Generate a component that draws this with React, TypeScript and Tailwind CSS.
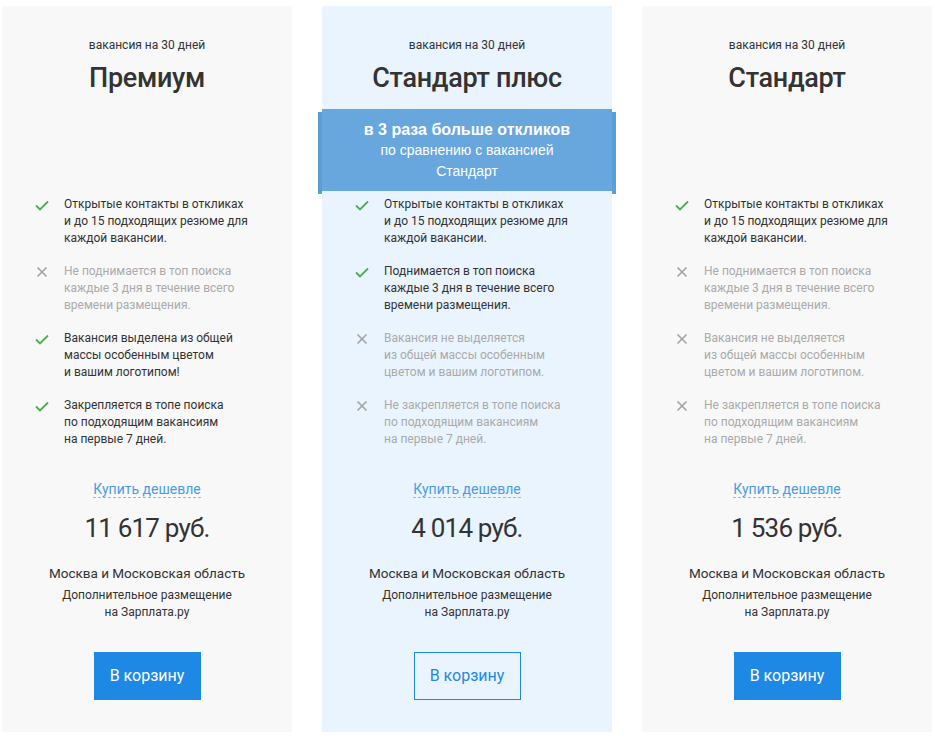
import React from "react";

type Feature = { ok: boolean; lines: string[] };

interface Plan {
  title: string;
  price: string;
  featured?: boolean;
  features: Feature[];
}

const F_CONTACTS: Feature = {
  ok: true,
  lines: ["Открытые контакты в откликах", "и до 15 подходящих резюме для", "каждой вакансии."],
};

const PLANS: Plan[] = [
  {
    title: "Премиум",
    price: "11 617 руб.",
    features: [
      F_CONTACTS,
      { ok: false, lines: ["Не поднимается в топ поиска", "каждые 3 дня в течение всего", "времени размещения."] },
      { ok: true, lines: ["Вакансия выделена из общей", "массы особенным цветом", "и вашим логотипом!"] },
      { ok: true, lines: ["Закрепляется в топе поиска", "по подходящим вакансиям", "на первые 7 дней."] },
    ],
  },
  {
    title: "Стандарт плюс",
    price: "4 014 руб.",
    featured: true,
    features: [
      F_CONTACTS,
      { ok: true, lines: ["Поднимается в топ поиска", "каждые 3 дня в течение всего", "времени размещения."] },
      { ok: false, lines: ["Вакансия не выделяется", "из общей массы особенным", "цветом и вашим логотипом."] },
      { ok: false, lines: ["Не закрепляется в топе поиска", "по подходящим вакансиям", "на первые 7 дней."] },
    ],
  },
  {
    title: "Стандарт",
    price: "1 536 руб.",
    features: [
      F_CONTACTS,
      { ok: false, lines: ["Не поднимается в топ поиска", "каждые 3 дня в течение всего", "времени размещения."] },
      { ok: false, lines: ["Вакансия не выделяется", "из общей массы особенным", "цветом и вашим логотипом."] },
      { ok: false, lines: ["Не закрепляется в топе поиска", "по подходящим вакансиям", "на первые 7 дней."] },
    ],
  },
];

function CheckIcon() {
  return (
    <svg width="14" height="11" viewBox="0 0 14 11" className="mt-[4px] shrink-0">
      <path d="M1 5.5 L5 9.5 L13 1.5" fill="none" stroke="#4cae50" strokeWidth="1.8" />
    </svg>
  );
}

function CrossIcon() {
  return (
    <svg width="14" height="11" viewBox="0 0 14 11" className="mt-[4px] shrink-0">
      <path d="M2.5 0.5 L11.5 9.5 M11.5 0.5 L2.5 9.5" fill="none" stroke="#a3a3a3" strokeWidth="1.6" />
    </svg>
  );
}

function PlanCard({ plan }: { plan: Plan }) {
  return (
    <div
      className={
        "flex w-[290px] flex-col pt-[31px] pb-[32px] " +
        (plan.featured ? "bg-[#eaf4fe]" : "bg-[#f8f8f8]")
      }
    >
      <div className="text-center text-[12px] leading-[16px] text-[#333]">вакансия на 30 дней</div>
      <h2 className="mt-[8px] text-center text-[27px] font-medium leading-[34px] tracking-[-0.3px] text-[#333]">
        {plan.title}
      </h2>

      <div className="mt-[14px] h-[82px]">
        {plan.featured && (
          <div
            className="relative h-[82px] bg-[#68a6de] pt-[10px] text-center text-white"
            style={{ fontFamily: "'Liberation Sans', Arial, sans-serif" }}
          >
            <div className="absolute top-[3px] left-[-4px] h-[82px] w-[4px] bg-[#5c9dd9]" />
            <div className="absolute top-[3px] right-[-4px] h-[82px] w-[4px] bg-[#5c9dd9]" />
            <div className="text-[16px] font-bold leading-[21px]">в 3 раза больше откликов</div>
            <div className="text-[14px] leading-[21px]">по сравнению с вакансией</div>
            <div className="text-[14px] leading-[21px]">Стандарт</div>
          </div>
        )}
      </div>

      <ul className="mt-[5px] flex flex-col gap-[16px] pl-[33px]">
        {plan.features.map((f, i) => (
          <li key={i} className="flex gap-[15px]">
            {f.ok ? <CheckIcon /> : <CrossIcon />}
            <div
              className={
                "text-[12px] leading-[17px] " + (f.ok ? "text-[#333]" : "text-[#aaa]")
              }
            >
              {f.lines.map((l, j) => (
                <div key={j}>{l}</div>
              ))}
            </div>
          </li>
        ))}
      </ul>

      <div className="mt-[29px] text-center">
        <a
          href="#"
          className="border-b border-dashed border-[#8dbcec] text-[14px] leading-[20px] text-[#4b9be6]"
        >
          Купить дешевле
        </a>
      </div>
      <div className="mt-[10px] text-center text-[26px] leading-[34px] tracking-[-0.8px] text-[#333]">
        {plan.price}
      </div>
      <div className="mt-[18px] text-center text-[13.5px] leading-[20px] text-[#333]">
        Москва и Московская область
      </div>
      <div className="mt-[4px] text-center text-[12px] leading-[17px] text-[#333]">
        Дополнительное размещение
        <br />
        на Зарплата.ру
      </div>
      <div className="mt-[31px] flex justify-center">
        <button
          type="button"
          className={
            "h-[48px] w-[107px] text-[16px] " +
            (plan.featured
              ? "border border-[#1e88e5] bg-transparent text-[#1e88e5]"
              : "bg-[#1e88e5] text-white")
          }
        >
          В корзину
        </button>
      </div>
    </div>
  );
}

export default function App() {
  return (
    <div
      className="min-h-[738px] bg-white pt-[6px] pl-[2px]"
      style={{ fontFamily: "Roboto, 'Noto Sans', sans-serif" }}
    >
      <div className="flex gap-[30px]">
        {PLANS.map((p) => (
          <PlanCard key={p.title} plan={p} />
        ))}
      </div>
    </div>
  );
}
